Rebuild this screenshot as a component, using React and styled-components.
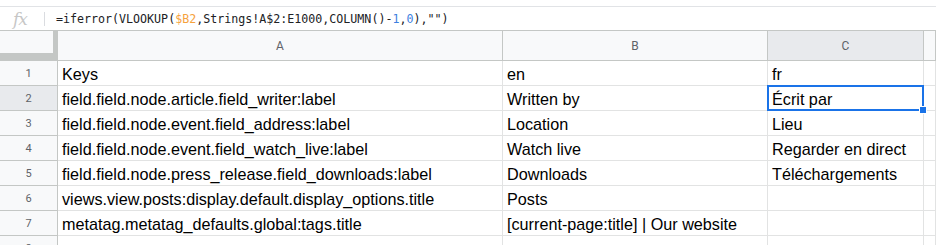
import React from "react";
import styled, { createGlobalStyle } from "styled-components";

const GlobalStyle = createGlobalStyle`
  html, body {
    margin: 0;
    padding: 0;
    background: #ffffff;
    overflow: hidden;
  }
  body {
    font-family: "Liberation Sans", Arial, sans-serif;
  }
`;

const Page = styled.div`
  width: 936px;
  height: 245px;
  overflow: hidden;
  background: #ffffff;
`;

const FormulaBar = styled.div`
  margin-top: 6px;
  height: 23px;
  border-top: 1px solid #e1e3e6;
  border-bottom: 1px solid #c4c7c5;
  display: flex;
  align-items: center;
`;

const FxIcon = styled.span`
  width: 44px;
  padding-left: 13px;
  box-sizing: border-box;
  font-family: "DejaVu Serif", "Liberation Serif", serif;
  font-style: italic;
  font-size: 17px;
  color: #c7c7c7;
  letter-spacing: -1px;
`;

const Divider = styled.span`
  width: 1px;
  height: 14px;
  background: #dadce0;
  margin-right: 11px;
`;

const Formula = styled.span`
  font-family: "DejaVu Sans Mono", "Liberation Mono", monospace;
  font-size: 11.65px;
  color: #202124;
  white-space: pre;
`;

const Tok = styled.span`
  color: ${(p) => (p.$kind === "ref" ? "#f6a23d" : "#3d7fe0")};
`;

const Sheet = styled.div`
  display: grid;
  grid-template-columns: 58px 445px 265px 156px 1fr;
  grid-template-rows: 30px;
  grid-auto-rows: 25px;
`;

const Corner = styled.div`
  box-sizing: border-box;
  background: #f8f9fa;
  border-right: 5px solid #c4c7c5;
  border-bottom: 8px solid #c4c7c5;
`;

const ColHead = styled.div`
  box-sizing: border-box;
  background: ${(p) => (p.$active ? "#e8eaed" : "#f8f9fa")};
  border-right: 1px solid #c4c7c5;
  border-bottom: 1px solid #c4c7c5;
  display: flex;
  align-items: center;
  justify-content: center;
  font-family: "Roboto", "Liberation Sans", sans-serif;
  font-size: 12px;
  color: #5f6368;
`;

const RowHead = styled.div`
  box-sizing: border-box;
  background: ${(p) => (p.$active ? "#e8eaed" : "#f8f9fa")};
  border-right: 1px solid #c4c7c5;
  border-bottom: 1px solid #c4c7c5;
  display: flex;
  align-items: center;
  justify-content: center;
  font-family: "Roboto", "Liberation Sans", sans-serif;
  font-size: 11px;
  color: #5f6368;
`;

const Cell = styled.div`
  position: relative;
  box-sizing: border-box;
  border-right: 1px solid #e2e3e3;
  border-bottom: 1px solid #e2e3e3;
  padding: 3px 4px 0;
  display: flex;
  align-items: center;
  font-family: "Liberation Sans", Arial, sans-serif;
  font-size: 16.2px;
  color: #000000;
  white-space: nowrap;
  overflow: visible;

  ${(p) =>
    p.$selected &&
    `
    &::after {
      content: "";
      position: absolute;
      top: -1px;
      left: -1px;
      right: -1px;
      bottom: -1px;
      border: 2px solid #1a73e8;
      pointer-events: none;
    }
    &::before {
      content: "";
      position: absolute;
      right: -4px;
      bottom: -4px;
      width: 6px;
      height: 6px;
      background: #1a73e8;
      border: 1px solid #ffffff;
      z-index: 2;
    }
  `}
`;

const rows = [
  ["Keys", "en", "fr"],
  ["field.field.node.article.field_writer:label", "Written by", "Écrit par"],
  ["field.field.node.event.field_address:label", "Location", "Lieu"],
  ["field.field.node.event.field_watch_live:label", "Watch live", "Regarder en direct"],
  ["field.field.node.press_release.field_downloads:label", "Downloads", "Téléchargements"],
  ["views.view.posts:display.default.display_options.title", "Posts", ""],
  ["metatag.metatag_defaults.global:tags.title", "[current-page:title] | Our website", ""],
  ["", "", ""],
];

export default function App() {
  return (
    <Page>
      <GlobalStyle />
      <FormulaBar>
        <FxIcon>fx</FxIcon>
        <Divider />
        <Formula>
          =iferror(VLOOKUP(<Tok $kind="ref">$B2</Tok>,Strings!A$2:E1000,COLUMN()-
          <Tok>1</Tok>,<Tok>0</Tok>),"")
        </Formula>
      </FormulaBar>
      <Sheet>
        <Corner />
        <ColHead>A</ColHead>
        <ColHead>B</ColHead>
        <ColHead $active>C</ColHead>
        <ColHead />
        {rows.map((r, i) => (
          <React.Fragment key={i}>
            <RowHead $active={i === 1}>{i + 1}</RowHead>
            <Cell>{r[0]}</Cell>
            <Cell>{r[1]}</Cell>
            <Cell $selected={i === 1}>{r[2]}</Cell>
            <Cell />
          </React.Fragment>
        ))}
      </Sheet>
    </Page>
  );
}
